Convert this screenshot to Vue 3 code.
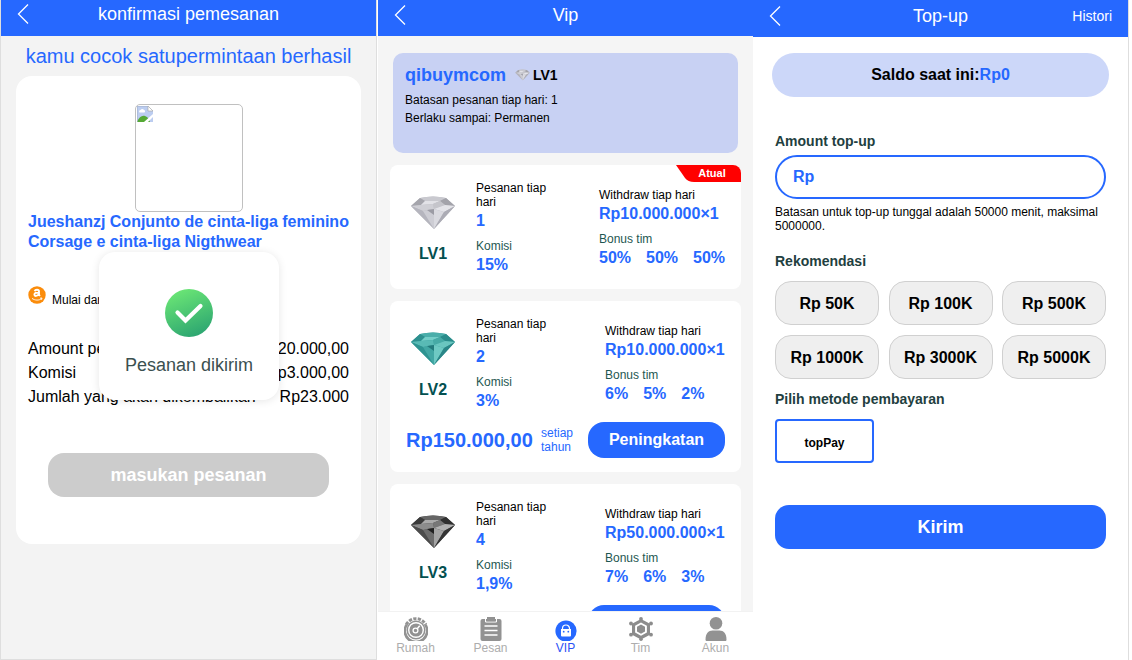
<template>
  <div class="board">
    <!-- Order confirmation -->
    <section class="screen order">
      <header class="bar">
        <svg class="back" viewBox="0 0 12 22"><path d="M11 1.5 1.5 11 11 20.5" /></svg>
        <h1>konfirmasi pemesanan</h1>
      </header>
      <p class="matched">kamu cocok satupermintaan berhasil</p>
      <div class="order-card">
        <div class="product-image">
          <svg width="16" height="16" viewBox="0 0 16 16">
            <path d="M0 0h11l5 5v11H0z" fill="#bccdf0" />
            <path d="M11 0v5h5z" fill="#fff" stroke="#aaa" stroke-width=".7" />
            <path d="M2.5 6.500a1.500 1.500 0 0 1 1-2.500 2 2 0 0 1 3.500 0 1.400 1.400 0 0 1 .5 2.500z" fill="#fff" />
            <path d="M0 16c2-5 5-7 8-6s4 3 5 6z" fill="#55a934" />
            <path d="M7 16 16 8v3l-5 5z" fill="#fff" />
            <path d="M.3 16V.3H11" fill="none" stroke="#9eabc4" stroke-width=".6" />
          </svg>
        </div>
        <h2>Jueshanzj Conjunto de cinta-liga feminino Corsage e cinta-liga Nigthwear</h2>
        <div class="source">
          <svg width="18" height="18" viewBox="0 0 18 18">
            <circle cx="9" cy="9" r="8.700" fill="#fb8c0b" />
            <path d="M6.700 5.200c.5-2 4.300-2.100 4.300.2v3.300l.9 1.300M11 6.600c-2.800-.1-4.600.4-4.600 2 0 1.900 3.200 1.800 4.600-.5" fill="none" stroke="#fff" stroke-width="1.900" />
            <path d="M4 12.400c3 2.200 7 2.200 9.500.3M12 12.200l2-.2-.5 1.800" fill="none" stroke="#fff" stroke-width=".9" />
          </svg>
          <span>Mulai dari</span>
        </div>
        <dl>
          <div v-for="row in summary" :key="row.label">
            <dt>{{ row.label }}</dt>
            <dd>{{ row.value }}</dd>
          </div>
        </dl>
        <button class="submit">masukan pesanan</button>
      </div>
      <div class="toast">
        <svg width="48" height="48" viewBox="0 0 48 48">
          <defs>
            <linearGradient id="ok" x1=".3" y1="0" x2=".7" y2="1">
              <stop offset="0" stop-color="#6be675" />
              <stop offset="1" stop-color="#2ba471" />
            </linearGradient>
          </defs>
          <circle cx="24" cy="24" r="24" fill="url(#ok)" />
          <path d="m12.500 23.500 8 8L35.500 17" fill="none" stroke="#fff" stroke-width="4.200" stroke-linecap="round" />
        </svg>
        <span>Pesanan dikirim</span>
      </div>
    </section>

    <!-- VIP levels -->
    <section class="screen vip">
      <header class="bar">
        <svg class="back" viewBox="0 0 12 22"><path d="M11 1.500 1.500 11 11 20.500" /></svg>
        <h1>Vip</h1>
      </header>
      <div class="profile">
        <div class="profile-name">
          <strong>qibuymcom</strong>
          <svg width="15" height="12" viewBox="0 0 46 36">
            <path v-for="(f, i) in facets" :key="i" :d="f" :fill="silver[i]" />
          </svg>
          <b>LV1</b>
        </div>
        <p>Batasan pesanan tiap hari: 1</p>
        <p>Berlaku sampai: Permanen</p>
      </div>
      <article v-for="level in levels" :key="level.name" class="level" :class="{ current: level.current }">
        <span v-if="level.current" class="ribbon">Atual</span>
        <div class="level-top">
          <div class="gem">
            <svg width="46" height="36" viewBox="0 0 46 36">
              <path v-for="(f, i) in facets" :key="i" :d="f" :fill="level.colors[i]" />
            </svg>
            <b>{{ level.name }}</b>
          </div>
          <div class="orders">
            <p>Pesanan tiap hari</p>
            <b>{{ level.orders }}</b>
            <p class="green">Komisi</p>
            <b>{{ level.commission }}</b>
          </div>
          <div class="withdraw">
            <p>Withdraw tiap hari</p>
            <b>{{ level.withdraw }}</b>
            <p class="green">Bonus tim</p>
            <div class="bonus">
              <b v-for="(n, i) in level.bonus" :key="i">{{ n }}</b>
            </div>
          </div>
        </div>
        <div v-if="level.price" class="level-buy">
          <strong>{{ level.price }}</strong>
          <span>setiap tahun</span>
          <button>Peningkatan</button>
        </div>
      </article>
      <nav>
        <a>
          <svg viewBox="0 0 24 24">
            <path d="M2.300 7.500A11 11 0 0 1 21.700 7.500" fill="none" stroke="#929292" stroke-width="3" stroke-dasharray="3.200 1.300" />
            <path d="M2.800 7.500A11.200 11.200 0 1 0 21.200 7.500" fill="none" stroke="#929292" stroke-width="2.600" />
            <circle cx="12" cy="13" r="9.500" fill="#929292" />
            <circle cx="12" cy="13" r="7.300" fill="none" stroke="#fff" stroke-width="1.400" />
            <circle cx="11.500" cy="13.500" r="2.400" fill="none" stroke="#fff" stroke-width="1.300" />
            <path d="m13.200 11.800 2.500-3" stroke="#fff" stroke-width="1.500" />
          </svg>
          <span>Rumah</span>
        </a>
        <a>
          <svg viewBox="0 0 24 24">
            <rect x="1.500" y="2" width="21" height="22" rx="2" fill="#929292" />
            <path d="M6.500 1v4h11V1" fill="none" stroke="#fff" stroke-width="1" />
            <rect x="8" y="0" width="8" height="4.300" fill="#929292" />
            <path d="M5.500 9h13M5.500 13.500h13M5.500 18h13" stroke="#fff" stroke-width="1.500" />
          </svg>
          <span>Pesan</span>
        </a>
        <a class="active">
          <svg viewBox="0 0 24 24">
            <circle cx="12" cy="14" r="10.600" fill="#2668ff" />
            <path d="M8.500 13v-1.500a3.500 3.500 0 0 1 7 0V13" fill="none" stroke="#fff" stroke-width="1.200" />
            <path d="M7 12h10v6.500a1 1 0 0 1-1 1H8a1 1 0 0 1-1-1z" fill="#fff" />
            <circle cx="9.700" cy="14.700" r=".9" fill="#2668ff" />
            <circle cx="14.300" cy="14.700" r=".9" fill="#2668ff" />
          </svg>
          <span>VIP</span>
        </a>
        <a>
          <svg viewBox="0 0 24 24">
            <path d="m12 2 9 4.700v11.100l-9 4.700-9-4.700V6.700z" fill="#8c8c8c" />
            <g fill="#8c8c8c">
              <circle cx="12" cy="1.900" r="1.900" /><circle cx="12" cy="22.200" r="1.800" />
              <circle cx="2" cy="6.500" r="1.900" /><circle cx="22" cy="6.500" r="1.900" />
              <circle cx="2" cy="17.700" r="1.900" /><circle cx="22" cy="17.700" r="1.900" />
            </g>
            <path d="m12 5.500 5.900 3.300v6.700L12 18.800l-5.900-3.300V8.800z" fill="#fff" />
            <path d="m12 7.500 4 2.300v4.700l-4 2.300-4-2.300V9.800z" fill="#8c8c8c" />
          </svg>
          <span>Tim</span>
        </a>
        <a>
          <svg viewBox="0 0 24 24">
            <circle cx="12" cy="6.300" r="6.300" fill="#929292" />
            <path d="M1.500 22.500c0-6 3-9 7-9h7c4 0 7 3 7 9 0 1-.5 1.500-1.500 1.500H3c-1 0-1.500-.5-1.500-1.500z" fill="#929292" />
          </svg>
          <span>Akun</span>
        </a>
      </nav>
    </section>

    <!-- Top-up form -->
    <section class="screen topup">
      <header class="bar">
        <svg class="back" viewBox="0 0 12 22"><path d="M11 1.500 1.500 11 11 20.500" /></svg>
        <h1>Top-up</h1>
        <a class="history">Histori</a>
      </header>
      <div class="balance">Saldo saat ini:<span>Rp0</span></div>
      <div class="form">
        <h3>Amount top-up</h3>
        <div class="amount">Rp</div>
        <p class="hint">Batasan untuk top-up tunggal adalah 50000 menit, maksimal 5000000.</p>
        <h3>Rekomendasi</h3>
        <div class="presets">
          <button v-for="p in presets" :key="p">{{ p }}</button>
        </div>
        <h3>Pilih metode pembayaran</h3>
        <button class="method">topPay</button>
        <button class="send">Kirim</button>
      </div>
    </section>
  </div>
</template>

<script setup>
const summary = [
  { label: 'Amount pesanan', value: 'Rp20.000,00' },
  { label: 'Komisi', value: 'Rp3.000,00' },
  { label: 'Jumlah yang akan dikembalikan', value: 'Rp23.000' },
]

// facets of the gem: body, crown band, girdle, then the pavilion
const facets = [
  'M10 3Q23 0 36 3L45 11 24 34 1 11z',
  'M10 3Q23 0 36 3L30 6H15z',
  'M10 3 15 6 11 10 1 11z',
  'M15 6H30L23 9 11 10z',
  'M36 3 45 11 35 10 30 6z',
  'M23 9 30 6 35 10 24 14z',
  'M1 11 11 10 23 9 24 14 13 16z',
  'M35 10 45 11 34 17 24 14z',
  'M1 11 13 16 24 34z',
  'M13 16 24 14V34z',
  'M24 14 34 17 24 34z',
  'M45 11 34 17 24 34z',
  'M17 15 24 14 24 20z',
]

const silver = ['#b9b9c0', '#c9c9cf', '#a5a5ac', '#e2e2e7', '#a3a3aa', '#c5c5cb', '#cfcfd5', '#e4e4e9', '#b5b5be', '#cdcdd4', '#dadae0', '#acacb5', '#9b9ba4']
const teal = ['#389d9b', '#4aaeaa', '#2d908f', '#74cec8', '#2a8c8b', '#46aaa6', '#59bab5', '#6ac6c0', '#2e9391', '#42a7a4', '#6ec9c3', '#2a8687', '#237a7c']
const black = ['#484848', '#666', '#3a3a3a', '#aaa', '#303030', '#777', '#8c8c8c', '#b2b2b2', '#4c4c4c', '#6c6c6c', '#a4a4a4', '#343434', '#202020']

const levels = [
  { name: 'LV1', current: true, colors: silver, orders: '1', commission: '15%', withdraw: 'Rp10.000.000×1', bonus: ['50%', '50%', '50%'] },
  { name: 'LV2', colors: teal, orders: '2', commission: '3%', withdraw: 'Rp10.000.000×1', bonus: ['6%', '5%', '2%'], price: 'Rp150.000,00' },
  { name: 'LV3', colors: black, orders: '4', commission: '1,9%', withdraw: 'Rp50.000.000×1', bonus: ['7%', '6%', '3%'], price: 'Rp500.000,00' },
]

const presets = ['Rp 50K', 'Rp 100K', 'Rp 500K', 'Rp 1000K', 'Rp 3000K', 'Rp 5000K']
</script>

<style>
body {
  background: #fff;
}
</style>

<style scoped>
.board {
  display: flex;
  width: 1132px;
  height: 660px;
  overflow: hidden;
  font-family: "Liberation Sans", Arial, sans-serif;
  color: #000;
}

.board * {
  box-sizing: border-box;
}

h1, h2, h3, p, dl, dd {
  margin: 0;
}

button {
  font-family: inherit;
  border: none;
  padding: 0;
}

.screen {
  position: relative;
  flex: none;
  height: 660px;
  overflow: hidden;
}

.bar {
  display: grid;
  grid-template-columns: 60px 1fr 60px;
  align-items: center;
  height: 36px;
  background: #2668ff;
  color: #fff;
}

.bar h1 {
  font-size: 18px;
  font-weight: 400;
  line-height: 20px;
  text-align: center;
  white-space: nowrap;
}

.back {
  width: 12px;
  height: 22px;
  margin-left: 16px;
  fill: none;
  stroke: #fff;
  stroke-width: 1.3;
}

/* order confirmation */
.order {
  width: 377px;
  border: 1px solid #dedede;
  border-top: none;
  background: #f3f3f3;
}

.order .bar {
  padding-bottom: 8px;
}

.matched {
  margin-top: 8px;
  font-size: 20px;
  line-height: 24px;
  text-align: center;
  color: #2668ff;
}

.order-card {
  height: 468px;
  margin: 8px 15px 0;
  padding: 28px 12px 0;
  border-radius: 16px;
  background: #fff;
}

.product-image {
  width: 108px;
  height: 108px;
  margin: 0 auto;
  padding: 1px;
  border: 1px solid #c0c0c0;
  border-radius: 5px;
}

.product-image svg {
  display: block;
}

.order-card h2 {
  font-size: 16px;
  line-height: 20px;
  color: #2668ff;
}

.source {
  display: flex;
  gap: 6px;
  height: 51px;
  margin-top: 34px;
  font-size: 12px;
}

.source span {
  padding-top: 7px;
}

dl div {
  display: flex;
  justify-content: space-between;
  font-size: 16px;
  line-height: 24px;
}

.submit {
  display: block;
  width: 281px;
  height: 44px;
  margin: 44px auto 0;
  border-radius: 16px;
  background: #ccc;
  color: #fff;
  font-size: 18px;
  font-weight: 700;
}

.toast {
  position: absolute;
  left: 98px;
  top: 252px;
  display: flex;
  flex-direction: column;
  align-items: center;
  gap: 18px;
  width: 180px;
  height: 148px;
  padding-top: 37px;
  border-radius: 16px;
  background: #fff;
  box-shadow: 0 1px 8px rgba(0, 0, 0, 0.1);
  font-size: 18px;
  line-height: 20px;
  color: #3b5050;
}

/* vip */
.vip {
  display: flex;
  flex-direction: column;
  width: 375px;
  margin-left: 1px;
  background: #f5f5f5;
}

.vip .bar {
  flex: none;
  padding-bottom: 6px;
}

.profile {
  flex: none;
  height: 100px;
  margin: 17px 15px 0;
  padding: 12px;
  border-radius: 10px;
  background: #c8d1f3;
  font-size: 12px;
  line-height: 18px;
}

.profile-name {
  display: flex;
  align-items: center;
  height: 20px;
  margin-bottom: 6px;
}

.profile-name strong {
  font-size: 18px;
  color: #2668ff;
}

.profile-name svg {
  margin: 0 3px 0 9px;
}

.profile-name b {
  font-size: 14px;
}

.level {
  position: relative;
  flex: none;
  height: 171px;
  margin: 12px 12px 0;
  border-radius: 8px;
  background: #fff;
  overflow: hidden;
}

.level.current {
  height: 124px;
}

.ribbon {
  position: absolute;
  top: 0;
  right: 0;
  width: 65px;
  height: 17px;
  padding-left: 7px;
  background: #f00;
  clip-path: path("M0 0H65V17H18Q12 17 9 13Z");
  color: #fff;
  font-size: 11px;
  font-weight: 700;
  line-height: 17px;
  text-align: center;
}

.level-top {
  display: flex;
  height: 117px;
}

.gem {
  display: flex;
  flex-direction: column;
  align-items: center;
  width: 86px;
  padding-top: 30px;
  font-size: 16px;
  line-height: 20px;
  color: #035050;
}

.gem svg {
  margin-bottom: 13px;
}

.orders {
  width: 76px;
  padding-top: 16px;
}

.withdraw {
  margin-left: 53px;
  padding-top: 23px;
  white-space: nowrap;
}

.current .withdraw {
  margin-left: 47px;
}

.level p {
  font-size: 12px;
  line-height: 14px;
}

.level p.green {
  margin-top: 6px;
  color: #1e5751;
}

.level-top .orders b,
.level-top .withdraw b {
  display: block;
  font-size: 16px;
  line-height: 24px;
  color: #2668ff;
}

.bonus {
  display: flex;
  gap: 15px;
}

.level-buy {
  display: flex;
  align-items: center;
  height: 44px;
  padding: 0 16px;
  color: #2668ff;
}

.level-buy strong {
  width: 135px;
  font-size: 20px;
}

.level-buy span {
  width: 47px;
  font-size: 12px;
  line-height: 14px;
}

.level-buy button {
  width: 137px;
  height: 36px;
  border-radius: 16px;
  background: #2668ff;
  color: #fff;
  font-size: 16px;
  font-weight: 700;
}

nav {
  position: absolute;
  left: 0;
  right: 0;
  bottom: 0;
  display: flex;
  height: 49px;
  background: #fff;
  border-top: 1px solid #f2f2f2;
}

nav a {
  display: flex;
  flex: 1;
  flex-direction: column;
  align-items: center;
  padding-top: 5px;
  color: #adadad;
  font-size: 12px;
  line-height: 14px;
}

nav svg {
  width: 24px;
  height: 24px;
}

nav .active {
  color: #2b52f5;
}

/* top-up */
.topup {
  width: 376px;
  border-right: 1px solid #dedede;
  background: #fff;
}

.topup .bar {
  height: 37px;
  padding-bottom: 5px;
}

.history {
  padding-right: 16px;
  text-align: right;
  font-size: 14px;
}

.balance {
  display: flex;
  align-items: center;
  justify-content: center;
  height: 44px;
  margin: 16px 19px 0;
  border-radius: 22px;
  background: #ccd7f9;
  font-size: 16px;
  font-weight: 700;
}

.balance span {
  color: #2668ff;
}

.form {
  margin: 36px 22px 0;
}

.form h3 {
  font-size: 14px;
  line-height: 16px;
  color: #1f4040;
}

.amount {
  height: 44px;
  margin: 6px 0;
  padding-left: 16px;
  border: 2px solid #2668ff;
  border-radius: 22px;
  color: #2668ff;
  font-size: 16px;
  font-weight: 700;
  line-height: 39px;
}

.hint {
  height: 48px;
  font-size: 12px;
  line-height: 14px;
}

.presets {
  display: grid;
  grid-template-columns: repeat(3, 104px);
  justify-content: space-between;
  row-gap: 10px;
  margin: 12px 0;
}

.presets button {
  height: 44px;
  padding-top: 1px;
  border: 1px solid #d0d0d0;
  border-radius: 16px;
  background: #efefef;
  color: #000;
  font-size: 16px;
  font-weight: 700;
}

.method {
  display: block;
  width: 99px;
  height: 44px;
  margin-top: 12px;
  padding-top: 4px;
  border: 2px solid #2668ff;
  border-radius: 4px;
  background: #fff;
  color: #000;
  font-size: 12px;
  font-weight: 700;
}

.send {
  width: 100%;
  height: 44px;
  margin-top: 42px;
  border-radius: 14px;
  background: #2668ff;
  color: #fff;
  font-size: 18px;
  font-weight: 700;
}
</style>
